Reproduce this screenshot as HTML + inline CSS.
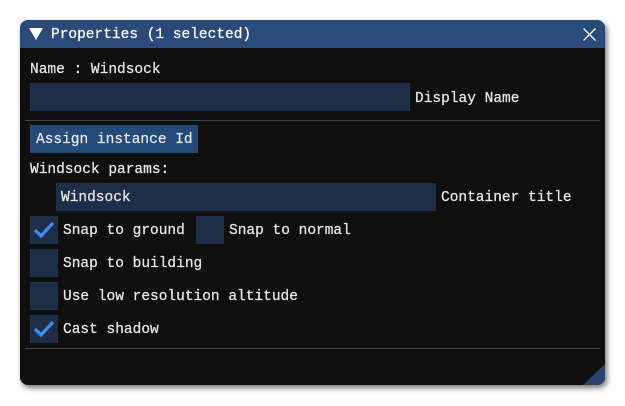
<!DOCTYPE html>
<html><head><style>
body{margin:0;width:625px;height:406px;background:#fff;position:relative;overflow:hidden;font-family:"Liberation Mono","DejaVu Sans Mono",monospace;font-size:14.5px;color:#e8e8e8}
.win{position:absolute;left:20px;top:20px;width:585px;height:365px;background:#0f0f0f;border-radius:8px;box-shadow:2px 3px 6px rgba(0,0,0,.55);overflow:hidden}
.title{position:absolute;left:0;top:0;width:585px;height:28px;background:#2a4a7a}
.a{position:absolute;white-space:pre;line-height:16px;-webkit-text-stroke:0.25px currentColor}
.f{position:absolute;background:#1f2e48}
.sep{position:absolute;left:5px;width:575px;height:1px;background:#44444d}
.cb{position:absolute;width:28px;height:28px;background:#1f2e48}
</style></head><body>
<div class="win">
<div class="title"></div>
<svg style="position:absolute;left:9px;top:8px" width="14" height="12"><polygon points="0,0 14,0 7,12" fill="#fff"/></svg>
<div class="a" style="left:31px;top:7px;color:#fff">Properties (1 selected)</div>
<svg style="position:absolute;left:563px;top:8px" width="13" height="13"><path d="M0.5 0.5L12.5 12.5M12.5 0.5L0.5 12.5" stroke="#fff" stroke-width="1.3"/></svg>

<div class="a" style="left:10px;top:42px">Name : Windsock</div>
<div class="f" style="left:10px;top:63px;width:380px;height:28px"></div>
<div class="a" style="left:395px;top:71px">Display Name</div>
<div class="sep" style="top:100px"></div>

<div class="f" style="left:10px;top:105px;width:168px;height:28px;background:#234a78"></div>
<div class="a" style="left:16px;top:112px">Assign instance Id</div>
<div class="a" style="left:10px;top:142px">Windsock params:</div>
<div class="f" style="left:36px;top:163px;width:380px;height:28px"></div>
<div class="a" style="left:41px;top:170px">Windsock</div>
<div class="a" style="left:421px;top:170px">Container title</div>

<div class="cb" style="left:10px;top:196px"></div>
<svg style="position:absolute;left:10px;top:196px" width="28" height="28"><path d="M5 14L11 20L23 7" stroke="#3d8ff0" stroke-width="3.2" fill="none"/></svg>
<div class="a" style="left:43px;top:203px">Snap to ground</div>
<div class="cb" style="left:176px;top:196px"></div>
<div class="a" style="left:209px;top:203px">Snap to normal</div>

<div class="cb" style="left:10px;top:229px"></div>
<div class="a" style="left:43px;top:236px">Snap to building</div>
<div class="cb" style="left:10px;top:262px"></div>
<div class="a" style="left:43px;top:269px">Use low resolution altitude</div>
<div class="cb" style="left:10px;top:295px"></div>
<svg style="position:absolute;left:10px;top:295px" width="28" height="28"><path d="M5 14L11 20L23 7" stroke="#3d8ff0" stroke-width="3.2" fill="none"/></svg>
<div class="a" style="left:43px;top:302px">Cast shadow</div>
<div class="sep" style="top:328px"></div>

<svg style="position:absolute;left:563px;top:344px" width="22" height="21"><polygon points="22,0 22,21 0,21" fill="#28446a"/></svg>
</div>
</body></html>
